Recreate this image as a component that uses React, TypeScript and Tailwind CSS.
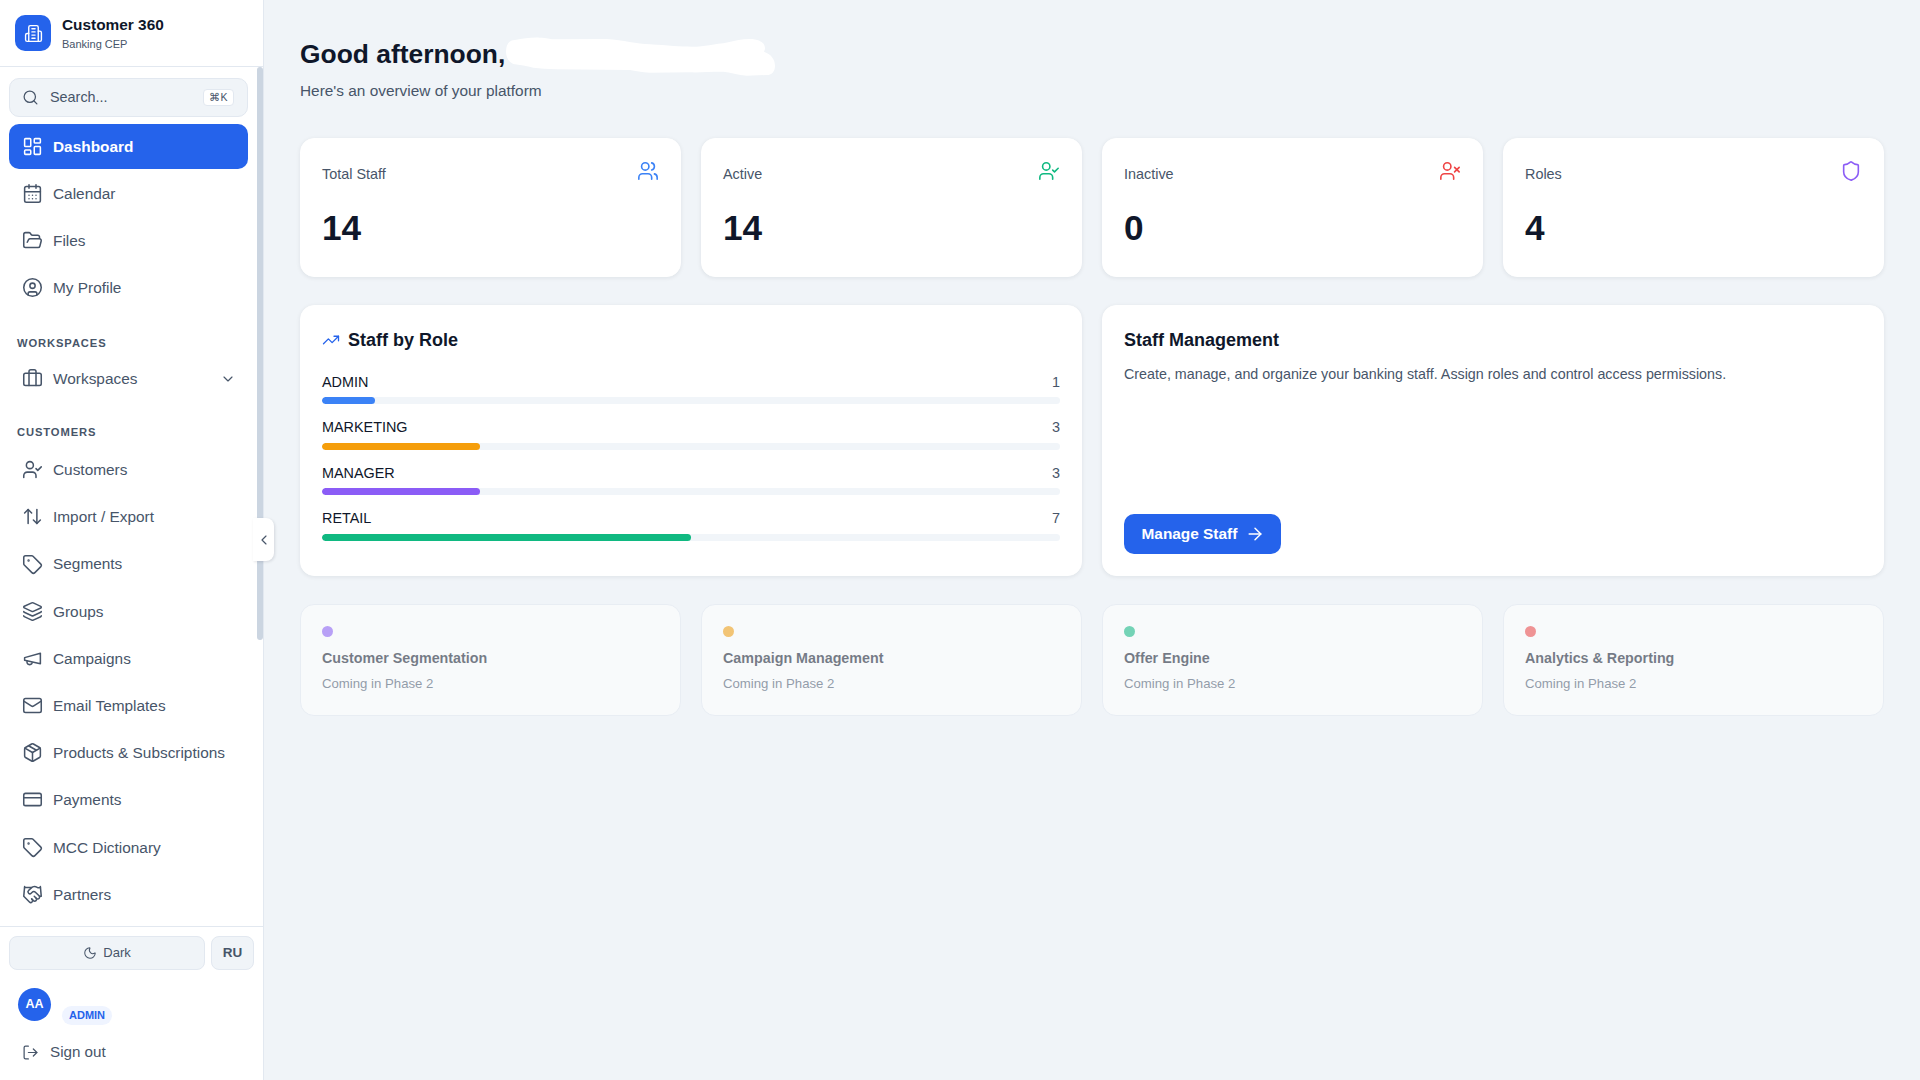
import {
  ArrowRight,
  ArrowUpDown,
  Briefcase,
  CalendarDays,
  ChevronDown,
  ChevronLeft,
  CircleUser,
  CreditCard,
  FolderOpen,
  Handshake,
  Layers,
  LayoutDashboard,
  LogOut,
  Mail,
  Moon,
  Package,
  Search,
  Shield,
  Tag,
  TrendingUp,
  UserCheck,
  UserX,
  Users,
} from 'lucide-react'
import type { SVGProps } from 'react'

type IconProps = SVGProps<SVGSVGElement> & { size?: number; strokeWidth?: number }

function BankLogo({ size = 24, strokeWidth = 2, ...rest }: IconProps) {
  return (
    <svg width={size} height={size} viewBox="0 0 24 24" fill="none" stroke="currentColor" strokeWidth={strokeWidth} strokeLinecap="round" strokeLinejoin="round" {...rest}>
      <path d="M6 22V4a2 2 0 0 1 2-2h8a2 2 0 0 1 2 2v18Z" />
      <path d="M6 12H4a2 2 0 0 0-2 2v6a2 2 0 0 0 2 2h2" />
      <path d="M18 9h2a2 2 0 0 1 2 2v9a2 2 0 0 1-2 2h-2" />
      <path d="M10 6h4" />
      <path d="M10 10h4" />
      <path d="M10 14h4" />
      <path d="M10 18h4" />
    </svg>
  )
}

function CampaignIcon({ size = 24, strokeWidth = 2, ...rest }: IconProps) {
  return (
    <svg width={size} height={size} viewBox="0 0 24 24" fill="none" stroke="currentColor" strokeWidth={strokeWidth} strokeLinecap="round" strokeLinejoin="round" {...rest}>
      <path d="m3 11 18-5v12L3 14v-3z" />
      <path d="M11.6 16.8a3 3 0 1 1-5.8-1.6" />
    </svg>
  )
}

const topNav = [
  { label: 'Dashboard', icon: LayoutDashboard, active: true },
  { label: 'Calendar', icon: CalendarDays },
  { label: 'Files', icon: FolderOpen },
  { label: 'My Profile', icon: CircleUser },
]

const customerNav = [
  { label: 'Customers', icon: UserCheck },
  { label: 'Import / Export', icon: ArrowUpDown },
  { label: 'Segments', icon: Tag },
  { label: 'Groups', icon: Layers },
  { label: 'Campaigns', icon: CampaignIcon },
  { label: 'Email Templates', icon: Mail },
  { label: 'Products & Subscriptions', icon: Package },
  { label: 'Payments', icon: CreditCard },
  { label: 'MCC Dictionary', icon: Tag },
  { label: 'Partners', icon: Handshake },
]

const stats = [
  { label: 'Total Staff', value: '14', icon: Users, color: 'text-[#3b82f6]' },
  { label: 'Active', value: '14', icon: UserCheck, color: 'text-[#10b981]' },
  { label: 'Inactive', value: '0', icon: UserX, color: 'text-[#ef4444]' },
  { label: 'Roles', value: '4', icon: Shield, color: 'text-[#8b5cf6]' },
]

const roles = [
  { label: 'ADMIN', count: 1, color: 'bg-[#3b82f6]' },
  { label: 'MARKETING', count: 3, color: 'bg-[#f59e0b]' },
  { label: 'MANAGER', count: 3, color: 'bg-[#8b5cf6]' },
  { label: 'RETAIL', count: 7, color: 'bg-[#10b981]' },
]

const phaseTwo = [
  { label: 'Customer Segmentation', color: 'bg-[#8b5cf6]' },
  { label: 'Campaign Management', color: 'bg-[#f59e0b]' },
  { label: 'Offer Engine', color: 'bg-[#10b981]' },
  { label: 'Analytics & Reporting', color: 'bg-[#ef4444]' },
]

function NavItem({ label, icon: Icon, active }: { label: string; icon: React.ElementType; active?: boolean }) {
  return (
    <div
      className={`flex h-[45px] shrink-0 items-center gap-[10.5px] rounded-[10px] px-[12.5px] text-[15.4px] ${
        active ? 'bg-[#2563eb] font-bold text-white' : 'text-[#475569]'
      }`}
    >
      <Icon size={21} strokeWidth={1.75} />
      <span>{label}</span>
    </div>
  )
}

function Sidebar() {
  return (
    <aside className="relative flex h-[1080px] w-[264px] shrink-0 flex-col border-r border-[#e2e8f0] bg-white">
      <div className="flex h-[67px] shrink-0 items-center gap-[11px] border-b border-[#e2e8f0] px-[15px]">
        <div className="flex h-[36px] w-[36px] items-center justify-center rounded-[10px] bg-[#2563eb] text-white">
          <BankLogo size={19} strokeWidth={1.75} />
        </div>
        <div>
          <div className="text-[15.4px] leading-[20px] font-bold text-[#0f172a]">Customer 360</div>
          <div className="mt-[1px] text-[11px] leading-[16px] text-[#475569]">Banking CEP</div>
        </div>
      </div>

      <div className="flex h-[859px] shrink-0 overflow-hidden">
        <nav className="flex w-[257px] shrink-0 flex-col px-[9px] pt-[11px]">
          <div className="mb-[7px] flex h-[39px] shrink-0 items-center gap-[11px] rounded-[10px] border border-[#e2e8f0] bg-[#f0f4f8] pr-[13px] pl-[12px] text-[14.4px] text-[#475569]">
            <Search size={17} strokeWidth={1.75} />
            <span className="flex-1">Search...</span>
            <span className="flex h-[17px] w-[31px] items-center justify-center rounded-[4px] border border-[#e2e8f0] bg-white text-[10.5px] text-[#475569]">⌘K</span>
          </div>

          <div className="flex flex-col gap-[2.1px]">
            {topNav.map((item) => (
              <NavItem key={item.label} {...item} />
            ))}
          </div>

          <div className="mt-[24.7px] mb-[5.5px] px-[8px] text-[11.2px] leading-[16px] font-bold tracking-[0.08em] text-[#475569]">
            WORKSPACES
          </div>
          <div className="flex h-[45px] shrink-0 items-center gap-[10.5px] rounded-[10px] px-[12.5px] text-[15.4px] text-[#475569]">
            <Briefcase size={21} strokeWidth={1.75} />
            <span className="flex-1">Workspaces</span>
            <ChevronDown size={16} strokeWidth={1.75} />
          </div>

          <div className="mt-[22.5px] mb-[7.2px] px-[8px] text-[11.2px] leading-[16px] font-bold tracking-[0.08em] text-[#475569]">
            CUSTOMERS
          </div>
          <div className="flex flex-col gap-[2.2px]">
            {customerNav.map((item) => (
              <NavItem key={item.label} {...item} />
            ))}
          </div>
        </nav>
        <div className="h-full w-[6px] bg-white">
          <div className="h-[573px] w-[6px] rounded-[3px] bg-[#cbd5e1]" />
        </div>
      </div>

      <div className="flex flex-1 flex-col border-t border-[#e2e8f0] px-[9px] pt-[9px]">
        <div className="flex gap-[6px]">
          <div className="flex h-[34px] w-[196px] items-center justify-center gap-[6px] rounded-[8px] border border-[#e2e8f0] bg-[#f0f4f8] text-[13px] text-[#475569]">
            <Moon size={14} strokeWidth={1.75} />
            Dark
          </div>
          <div className="flex h-[34px] w-[43px] items-center justify-center rounded-[8px] border border-[#e2e8f0] bg-[#f0f4f8] text-[13.5px] font-bold text-[#475569]">
            RU
          </div>
        </div>
        <div className="mt-[18px] flex px-[9px]">
          <div className="flex h-[33px] w-[33px] items-center justify-center rounded-full bg-[#2563eb] pb-[1px] text-[12.5px] font-bold text-white">
            AA
          </div>
          <span className="mt-[18px] ml-[11px] h-[19px] rounded-full bg-[#eff4ff] px-[7px] text-[11px] leading-[19px] font-bold text-[#2563eb]">
            ADMIN
          </span>
        </div>
        <div className="mt-[16px] flex items-center gap-[11px] px-[13px] text-[15.2px] text-[#475569]">
          <LogOut size={17} strokeWidth={1.75} />
          Sign out
        </div>
      </div>

      <button className="absolute top-[518px] -right-[11px] flex h-[43px] w-[21px] items-center justify-center rounded-r-[8px] bg-white text-[#475569] shadow-[1px_1px_3px_rgba(15,23,42,0.12)]">
        <ChevronLeft size={16} strokeWidth={1.75} />
      </button>
    </aside>
  )
}

export default function App() {
  return (
    <div className="flex h-[1080px] overflow-hidden bg-[#f0f4f8] font-['Liberation_Sans',Arial,sans-serif]">
      <Sidebar />
      <main className="flex-1 px-[36px] pt-[36px]">
        <div className="relative">
          <h1 className="text-[26.4px] leading-[36px] font-bold text-[#0f172a]">Good afternoon,</h1>
          {/* name is blanked out in the screenshot */}
          <svg className="absolute top-[-11px] left-[190px]" width="300" height="60" viewBox="0 0 900 180">
            <path
              d="M48 80 C48 55 60 45 75 45 C100 40 130 36 150 38 C170 38 180 42 190 43 L350 42 C400 46 440 56 480 58 C540 62 580 66 620 65 C660 62 680 56 700 55 C730 48 755 42 780 42 C810 42 826 55 825 72 L822 80 C845 88 855 105 855 122 C855 140 845 150 830 150 L770 152 C745 150 720 142 700 140 C660 140 630 143 600 142 L480 143 C455 142 435 137 420 135 L200 133 C175 132 150 130 130 128 C110 124 90 119 70 117 C55 110 48 95 48 80 Z"
              fill="#ffffff"
            />
          </svg>
          <p className="mt-[8px] text-[15.4px] leading-[22px] text-[#475569]">Here's an overview of your platform</p>
        </div>

        <div className="mt-[36px] grid grid-cols-4 gap-[20px]">
          {stats.map(({ label, value, icon: Icon, color }) => (
            <div key={label} className="h-[139px] rounded-[14px] border border-white bg-white px-[21px] pt-[21px] shadow-[0_1px_4px_rgba(15,23,42,0.08)]">
              <div className="flex h-[28px] items-start justify-between">
                <span className="text-[14.4px] leading-[28px] text-[#475569]">{label}</span>
                <Icon size={22} strokeWidth={1.75} className={color} />
              </div>
              <div className="mt-[18px] text-[35.2px] leading-[44px] font-bold text-[#0f172a]">{value}</div>
            </div>
          ))}
        </div>

        <div className="mt-[28px] grid h-[271px] grid-cols-2 gap-[20px]">
          <div className="rounded-[14px] border border-white bg-white px-[21px] pt-[21px] shadow-[0_1px_4px_rgba(15,23,42,0.08)]">
            <div className="flex items-center gap-[8px]">
              <TrendingUp size={18} strokeWidth={1.75} className="text-[#2563eb]" />
              <h2 className="text-[18px] leading-[26px] font-bold text-[#0f172a]">Staff by Role</h2>
            </div>
            <div className="mt-[18.7px] flex flex-col gap-[13px]">
              {roles.map(({ label, count, color }) => (
                <div key={label}>
                  <div className="flex justify-between text-[14.4px] leading-[20px]">
                    <span className="text-[#0f172a]">{label}</span>
                    <span className="text-[#475569]">{count}</span>
                  </div>
                  <div className="mt-[5.5px] h-[7px] overflow-hidden rounded-full bg-[#f1f5f9]">
                    <div className={`h-full rounded-full ${color}`} style={{ width: `${(count / 14) * 100}%` }} />
                  </div>
                </div>
              ))}
            </div>
          </div>

          <div className="flex flex-col rounded-[14px] border border-white bg-white px-[21px] pt-[21px] pb-[21px] shadow-[0_1px_4px_rgba(15,23,42,0.08)]">
            <h2 className="text-[18px] leading-[26px] font-bold text-[#0f172a]">Staff Management</h2>
            <p className="mt-[10px] text-[14.3px] leading-[22px] text-[#475569]">
              Create, manage, and organize your banking staff. Assign roles and control access permissions.
            </p>
            <button className="mt-auto flex h-[40px] w-[157px] items-center gap-[8px] rounded-[10px] bg-[#2563eb] pl-[17.5px] text-[15.4px] font-bold text-white">
              Manage Staff
              <ArrowRight size={20} strokeWidth={1.75} />
            </button>
          </div>
        </div>

        <div className="mt-[28px] grid grid-cols-4 gap-[20px]">
          {phaseTwo.map(({ label, color }) => (
            <div key={label} className="h-[112px] rounded-[14px] border border-[#e2e8f0] bg-white px-[21px] pt-[21px] opacity-[0.55]">
              <div className={`h-[11px] w-[11px] rounded-full ${color}`} />
              <div className="mt-[11px] text-[14.3px] leading-[20px] font-bold text-[#0f172a]">{label}</div>
              <div className="mt-[6px] text-[13.2px] leading-[20px] text-[#475569]">Coming in Phase 2</div>
            </div>
          ))}
        </div>
      </main>
    </div>
  )
}
